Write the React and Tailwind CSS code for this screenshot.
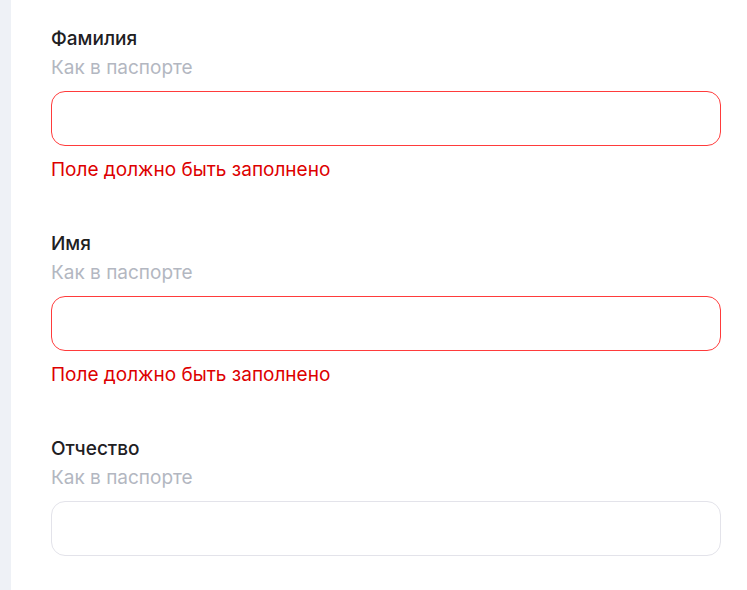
export default function App() {
  const fields = [
    { label: "Фамилия", error: true },
    { label: "Имя", error: true },
    { label: "Отчество", error: false },
  ];
  return (
    <div className="flex w-[747px] h-[590px] bg-white overflow-hidden" style={{ fontFamily: "Inter, 'Noto Sans', sans-serif" }}>
      <div className="w-[11px] shrink-0 bg-[#eef1f6]" />
      <div className="flex-1 pl-[40px] pr-[26px] pt-[27px]">
        {fields.map((f, i) => (
          <div key={i} className={i > 0 ? "mt-[50px]" : ""}>
            <div className="text-[19px] leading-[24px] font-medium text-[#21201f]">{f.label}</div>
            <div className="mt-[5px] text-[19px] leading-[24px] text-[#b3b7c1]">Как в паспорте</div>
            <div
              className={
                "mt-[11px] h-[55px] rounded-[14px] border bg-white " +
                (f.error ? "border-[#ff3b3b]" : "border-[#e3e3ea]")
              }
            />
            {f.error && (
              <div className="mt-[12px] text-[19px] leading-[24px] text-[#dd0000]">Поле должно быть заполнено</div>
            )}
          </div>
        ))}
      </div>
    </div>
  );
}
